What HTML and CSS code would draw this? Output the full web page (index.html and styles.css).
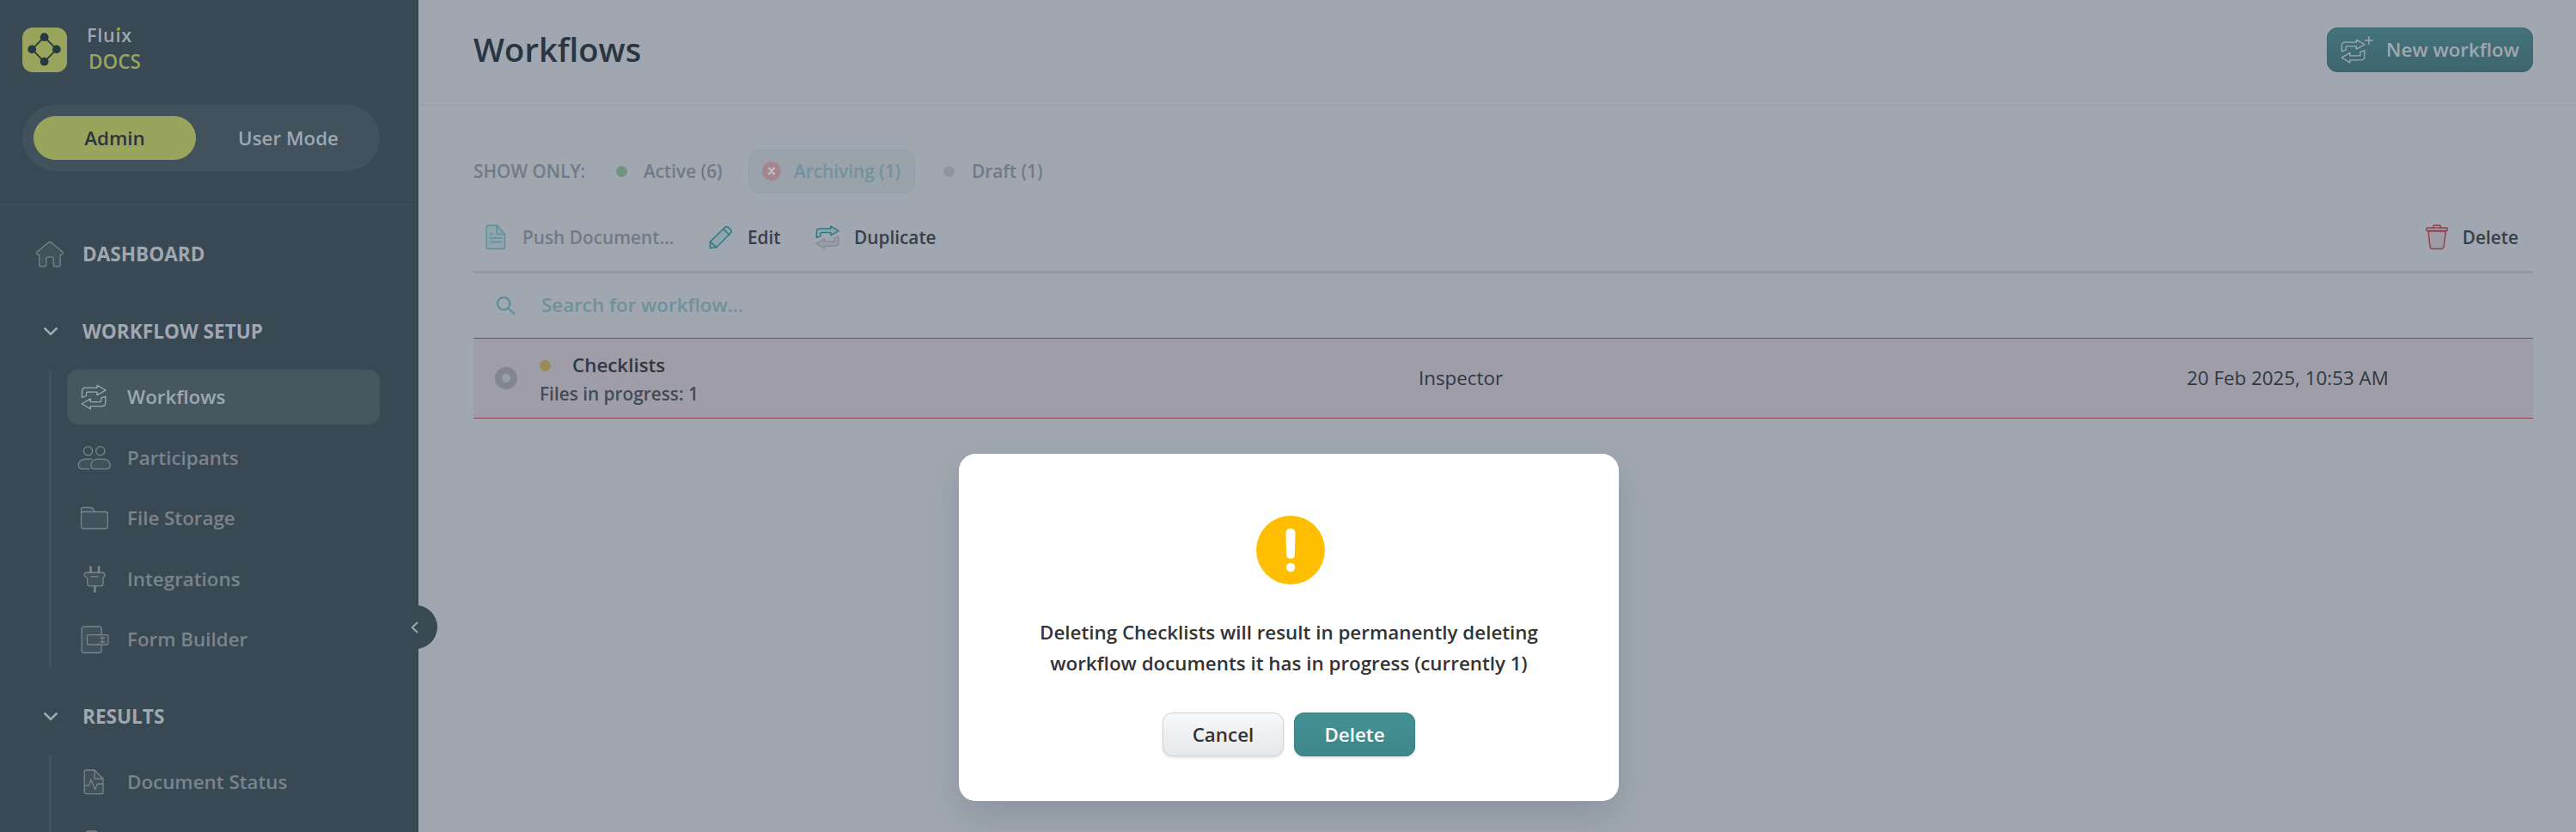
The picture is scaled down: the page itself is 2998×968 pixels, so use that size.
FILE: index.html
```html
<!DOCTYPE html>
<html lang="en">
<head>
<meta charset="utf-8">
<title>Workflows</title>
<link rel="stylesheet" href="styles.css">
</head>
<body>
<svg class="defs" width="0" height="0">
  <symbol id="flow-top" viewBox="0 0 30 30"><path d="M1.500 15.500V8.200Q1.500 4.200 5.500 4.200H19V1.200L29 7L19 12.600V9.200H7.500Q6.500 9.200 6.500 10.200V13.500Z"/></symbol>
  <symbol id="flow-bottom" viewBox="0 0 30 30"><path d="M28.800 14.200V21.500Q28.800 25.700 24.600 25.700H11.200V28.800L1.200 22.800L11.200 17V20.600H22.600Q23.700 20.600 23.700 19.500V16.200Z"/></symbol>
</svg>
<div class="app">
  <aside class="sidebar">
    <div class="brand">
      <svg class="brand-mark" viewBox="0 0 52 52"><rect width="52" height="52" rx="12"/><path d="M25.600 11L39.800 25.300L25.600 39.800L11.200 25.300Z"/><circle cx="25.600" cy="11.200" r="4.900"/><circle cx="39.800" cy="25.400" r="4.900"/><circle cx="25.600" cy="39.700" r="4.900"/><circle cx="11.200" cy="25.400" r="4.900"/></svg>
      <div class="brand-text"><span class="brand-name">Fluix</span><span class="brand-product">DOCS</span></div>
    </div>
    <div class="mode">
      <span class="mode-option mode-active">Admin</span>
      <span class="mode-option">User Mode</span>
    </div>
    <nav class="nav">
      <div class="heading">
        <svg class="home" viewBox="0 0 34 32"><path d="M14.600 2.700Q17 .8 19.400 2.700L32 13.200Q33 16.400 29.200 16.400V27.700Q29.200 30.200 26.900 30.200H23.500Q21.200 30.200 21.200 27.700V21.500Q21.200 19.200 19 19.200H15Q12.800 19.200 12.800 21.500V27.700Q12.800 30.200 10.500 30.200H7Q4.700 30.200 4.700 27.700V16.400Q1 16.400 2 13.200Z"/></svg>
        <span>DASHBOARD</span>
      </div>
      <div class="heading">
        <svg class="chevron" viewBox="0 0 16 10"><path d="M1.300 1.300L8 7.900L14.700 1.300"/></svg>
        <span>WORKFLOW SETUP</span>
      </div>
      <div class="group">
        <div class="item item-active"><svg class="icon flow" viewBox="0 0 30 30"><use href="#flow-top"/><use href="#flow-bottom"/></svg><span>Workflows</span></div>
        <div class="item"><svg class="icon people" viewBox="0 0 40 30"><circle cx="12.500" cy="6.700" r="5.100"/><circle cx="26.800" cy="6.700" r="5.100"/><path class="shade" d="M14.200 27.600H6Q1.300 27.600 1.300 23Q2.200 16.200 10 16.200H16.500Q14.500 18 14.500 22Z"/><path d="M14.200 27.600H6Q1.300 27.600 1.300 23Q2.200 16.200 10 16.200H16.800"/><path class="fill" d="M20.500 27.600Q15.700 27.600 15.700 23Q16.700 16.200 24 16.200H29.500Q37 16.200 38.300 23Q38.300 27.600 33.500 27.600Z"/></svg><span>Participants</span></div>
        <div class="item"><svg class="icon folder" viewBox="0 0 34 28"><path class="fill" d="M17.500 6.500H30Q32.300 6.500 32.300 8.800V23.500Q32.300 26 30 26H4Q1.500 26 1.500 23.500V3.500Q1.500 1.500 3.500 1.500H12.500Q14 1.500 15.500 3.500Z"/><path d="M1.500 8.500Q1.500 6.500 4 6.500H17.500"/></svg><span>File Storage</span></div>
        <div class="item"><svg class="icon plug" viewBox="0 0 26 32"><path class="fill" d="M4 8H22Q25.200 8.500 25 12L23 14.500V21Q23 23.900 20 23.900H8Q4.700 23.900 4.700 21V14.500L.9 12Q.7 8.500 4 8Z"/><path d="M8.800 12.800H17.500"/><path class="pins" d="M8.500 1.500V8M18 1.500V8M13.300 24V30.500"/></svg><span>Integrations</span></div>
        <div class="item"><svg class="icon form" viewBox="0 0 33 33"><path class="fill" d="M24.200 10.500V3.500Q24.200 1 21.700 1H4Q1.200 1 1.200 3.500V29Q1.200 31.500 4 31.500H21.700Q24.200 31.500 24.200 29V22"/><rect class="fill" x="7.500" y="10.700" width="24.500" height="11.300" rx="1.500"/><path d="M23 14H27.500M25.200 14V19M23 19H27.500"/></svg><span>Form Builder</span></div>
      </div>
      <div class="heading">
        <svg class="chevron" viewBox="0 0 16 10"><path d="M1.300 1.300L8 7.900L14.700 1.300"/></svg>
        <span>RESULTS</span>
      </div>
      <div class="group">
        <div class="item"><svg class="icon doc" viewBox="0 0 24 30"><path class="fill" d="M1.200 26.500V3Q1.200 1 3.200 1H13L23 11V26.500Q23 28.700 21 28.700H3.200Q1.200 28.700 1.200 26.500Z"/><path d="M13 1V11H23M1.500 18.800H6.500L9 12L13.500 23.500L16.200 17H22.500"/></svg><span>Document Status</span></div>
        <div class="item"><svg class="icon doc" viewBox="0 0 24 30"><path class="fill" d="M3.500 3Q3.500 1 5.500 1H13.500Q15.500 1 16.500 3V28H3.500Z"/></svg></div>
      </div>
    </nav>
    <button class="collapse"><svg viewBox="0 0 9 14"><path d="M7.500 1.500L1.800 7L7.500 12.500"/></svg></button>
  </aside>
  <main class="main">
    <header class="header">
      <h1>Workflows</h1>
      <button class="new">
        <svg class="new-icon" viewBox="0 0 38 32"><use href="#flow-top" x="0" y="3" width="29" height="29"/><use href="#flow-bottom" x="0" y="3" width="29" height="29"/><path d="M33 .500V9.500M28.500 5H37.500"/></svg>
        <span>New workflow</span>
      </button>
    </header>
    <section class="content">
      <div class="filters">
        <span class="filters-label">SHOW ONLY:</span>
        <span class="filter active"><i class="dot green"></i>Active (6)</span>
        <span class="filter archiving"><svg viewBox="0 0 22 22"><circle cx="11" cy="11" r="11"/><path d="M8 7.500L14 14.500M14 7.500L8 14.500"/></svg>Archiving (1)</span>
        <span class="filter draft"><i class="dot grey"></i>Draft (1)</span>
      </div>
      <div class="toolbar">
        <span class="tool disabled"><svg class="t-doc" viewBox="0 0 24 30"><path class="tint" d="M1.200 26.500V3Q1.200 1.200 3 1.200H13.500L22.500 11.500V26.500Q22.500 28.600 20.500 28.600H3.200Q1.200 28.600 1.200 26.500Z"/><path d="M13.300 1.500V11.500H22.500M5.500 11.300H8M5.500 16H18.500M5.500 20.500H18.500"/></svg>Push Document...</span>
        <span class="tool edit"><svg class="t-pencil" viewBox="0 0 28 28"><path class="tint" d="M1.500 19.200L18.500 2.700Q20.500 .800 22.500 2.500L25.300 5.200Q27 7.200 25.300 9.200L8.700 25.800L1.300 26.700Z"/><path d="M17 4.300L23.600 11M1.500 19.200L8.700 25.800"/></svg>Edit</span>
        <span class="tool duplicate"><svg class="t-dup" viewBox="0 0 30 30"><use class="top" href="#flow-top"/><use class="bottom" href="#flow-bottom"/></svg>Duplicate</span>
        <span class="tool delete"><svg class="t-trash" viewBox="0 0 26 30"><path class="tint" d="M3 8L5 25.500Q5.300 28.600 8 28.600H18Q20.700 28.600 21.200 25.500L23.500 8Z"/><rect class="tint" x="1" y="4" width="24.200" height="3.600" rx="1"/><path d="M9 4V2.500Q9 1.300 10 1.300H16.300Q17.300 1.300 17.300 2.500V4"/></svg>Delete</span>
      </div>
      <div class="search"><svg viewBox="0 0 24 22"><circle cx="9.200" cy="8.200" r="7.200"/><path d="M14 13.500L21.300 19.800"/></svg><span>Search for workflow...</span></div>
      <div class="row">
        <span class="radio"></span>
        <div class="name"><div class="name-title"><i class="dot yellow"></i>Checklists</div><div class="name-sub">Files in progress: 1</div></div>
        <span class="role">Inspector</span>
        <span class="date">20 Feb 2025, 10:53 AM</span>
      </div>
    </section>
  </main>
</div>
<div class="overlay">
  <div class="dialog">
    <svg class="warn" viewBox="0 0 80 80"><circle cx="40" cy="40" r="40"/><path d="M34.500 20.500Q34.500 15 40 15Q45.500 15 45.500 20.500L44.900 45.500Q44.500 50 40 50Q35.500 50 35.100 45.500Z"/><circle class="point" cx="40" cy="60" r="5.200"/></svg>
    <p>Deleting Checklists will result in permanently deleting<br>workflow documents it has in progress (currently 1)</p>
    <div class="actions"><button class="btn cancel">Cancel</button><button class="btn confirm">Delete</button></div>
  </div>
</div>
</body>
</html>
```

FILE: styles.css
```css
* { box-sizing: border-box; }
html, body { margin: 0; height: 968px; overflow: hidden; }
body { font: 600 22.360px "Open Sans", "Noto Sans", sans-serif; background: #a0a7b0; color: #2f3842; }
button { font: inherit; border: 0; padding: 0; }
svg { flex: none; fill: none; stroke-linejoin: round; stroke-linecap: round; }
svg.defs { position: absolute; }
.app { display: flex; height: 968px; }

.sidebar { position: relative; width: 487px; height: 968px; flex: none; background: #384953; color: #a0a7b0; }
.brand { display: flex; height: 122px; padding: 32px 0 0 26px; }
.brand-mark { width: 52px; height: 52px; fill: #263a45; }
.brand-mark rect { fill: #99a55c; }
.brand-mark path { fill: none; stroke: #263a45; stroke-width: 1.800; }
.brand-text { display: flex; flex-direction: column; padding-left: 23px; }
.brand-name { position: relative; font-size: 21.500px; letter-spacing: .8px; line-height: 17px; height: 30px; }
.brand-name::after { content: ""; position: absolute; left: 35px; top: 0; width: 4px; height: 3px; border-radius: 1px; background: #93a02f; }
.brand-product { font-size: 22.500px; line-height: 19px; color: #99a55c; padding-left: 2px; }
.mode { display: flex; width: 416px; height: 77px; margin-left: 26px; padding: 13px; border-radius: 39px; background: #41525c; }
.mode-option { flex: none; width: 189px; display: flex; align-items: center; justify-content: center; padding-bottom: 1px; }
.mode-option + .mode-option { width: 201px; padding-left: 14px; }
.mode-active { background: #99a55c; color: #2b3540; border-radius: 26px; }
.nav { margin-top: 38px; height: 731px; overflow: hidden; }
.nav::before { content: ""; display: block; width: 481px; height: 1px; background: #41525c; }
.heading { display: flex; align-items: center; height: 64px; margin-top: 26px; padding-left: 41px; font-weight: 700; font-size: 22.600px; }
.heading svg { stroke: #a0a7b0; }
.heading span { padding-left: 21px; padding-bottom: 2px; }
.heading .home { width: 34px; height: 32px; stroke: #7c838d; stroke-width: 1.300; fill: #41525c; }
.chevron { width: 16px; height: 10px; margin: 0 8px 0 10px; stroke-width: 2.600; }
.group { margin: 12px 0 0 57px; width: 385px; padding-left: 18px; border-left: 3px solid #41525c; display: flex; flex-direction: column; gap: 6.500px; }
.item { flex: none; display: flex; align-items: center; height: 64px; border-radius: 13px; color: #7c838d; }
.item span { padding-left: 19px; padding-bottom: 1px; }
.item-active { background: #47575f; color: #a0a7b0; }
.icon { stroke: currentColor; stroke-width: 1.300; }
.icon .fill, .icon .shade { fill: #41525c; }
.icon .shade { stroke: none; }
.flow { width: 30px; height: 30px; margin: 0 5px 0 16px; }
.people { width: 40px; height: 30px; margin-left: 12px; margin-right: -1px; }
.folder { width: 34px; height: 28px; margin: 0 2px 0 15px; }
.plug { width: 26px; height: 32px; margin: 0 6px 0 19px; }
.plug .pins { stroke-width: 2.600; }
.form { width: 33px; height: 33px; margin: 0 2px 0 16px; }
.doc { width: 24px; height: 30px; margin: 0 8px 0 19px; }
.collapse { position: absolute; left: 458px; top: 704px; width: 51px; height: 51px; border-radius: 50%; background: #384953; display: flex; align-items: center; padding-left: 20px; }
.collapse svg { width: 9px; height: 14px; stroke: #a0a7b0; stroke-width: 2; }

.main { flex: 1; }
.header { display: flex; align-items: center; justify-content: space-between; height: 123px; padding: 0 50px 6px 64px; border-bottom: 1px solid #949ca5; }
h1 { margin: 0; padding-bottom: 2px; font-size: 38.200px; font-weight: 600; color: #2b3540; }
.new { display: flex; align-items: center; width: 240px; height: 52px; border-radius: 13px; padding-left: 16px; background: linear-gradient(#43737c, #3e656e); box-shadow: inset 0 0 0 1px #3d6771; color: #a0a7b0; }
.new span { padding-bottom: 1px; }
.new-icon { width: 38px; height: 32px; margin-right: 15px; stroke: #a0a7b0; stroke-width: 1.400; }
.content { padding: 0 50px 0 64px; }
.filters { display: flex; align-items: center; height: 51px; margin-top: 51px; font-size: 20.8px; color: #727a84; }
.filters-label { width: 166px; padding-bottom: 1px; }
.filter { display: flex; align-items: center; height: 51px; padding-bottom: 1px; }
.dot { flex: none; width: 13px; height: 13px; border-radius: 50%; }
.green { background: #729282; margin-right: 19px; }
.grey { background: #8e959e; margin-right: 20px; }
.yellow { background: #9c8b56; margin: 3px 25px 0 0; }
.active { width: 154px; }
.archiving { width: 194px; padding-left: 15px; border: 1px solid #8fa0a9; border-radius: 13px; background: #9aa2ac; color: #71939b; }
.archiving svg { width: 22px; height: 22px; margin-right: 15px; fill: #a5858e; stroke: #c0c4ca; stroke-width: 2; }
.archiving circle { stroke: none; }
.draft { padding-left: 33px; }
.toolbar { display: flex; align-items: center; height: 93px; padding: 12px 17px 0 14px; border-bottom: 3px solid #8f97a0; font-size: 20.8px; }
.tool { display: flex; align-items: center; color: #373f4a; }
.disabled { color: #727a84; width: 260px; }
.tool svg { stroke: #2b7b84; stroke-width: 1.600; }
.tool .tint { fill: #91a4ad; }
.tool .t-doc { width: 24px; height: 30px; margin-right: 19px; stroke: #5c9199; stroke-width: 1.500; }
.t-pencil { width: 28px; height: 28px; margin-right: 17px; }
.edit { width: 124px; }
.t-dup { width: 28px; height: 28px; margin-right: 17px; }
.t-dup .top { fill: #91a4ad; }
.t-dup .bottom { stroke: #858c95; fill: #989fa8; }
.delete { margin-left: auto; }
.tool .t-trash { width: 26px; height: 30px; margin-right: 17px; stroke: #8f424e; stroke-width: 1.500; }
.t-trash .tint { fill: #9f9ca6; }
.search { display: flex; align-items: center; height: 75px; padding-left: 26px; color: #70919a; }
.search span { padding-bottom: 2px; }
.search svg { width: 24px; height: 22px; margin-right: 29px; stroke: #5c9199; stroke-width: 2.300; }
.row { display: grid; grid-template-columns: 77px 1023px 894px 1fr; align-items: center; height: 94px; border-top: 1px solid #8a444f; border-bottom: 1px solid #8a444f; background: #9f9ea8; }
.radio { width: 26px; height: 26px; margin-left: 25px; border-radius: 50%; border: 8px solid #81878f; }
.name { padding-top: 2px; }
.name-title { display: flex; align-items: center; height: 30px; }
.name-sub { font-size: 20.8px; line-height: 30px; margin-top: 4px; color: #434b56; }
.role, .date { font-weight: 400; padding-bottom: 1px; }

.overlay { position: absolute; left: 0; top: 0; width: 2998px; height: 968px; padding-top: 528px; display: flex; justify-content: center; align-items: flex-start; overflow: hidden; }
.dialog { display: flex; flex-direction: column; align-items: center; width: 768px; height: 404px; margin-left: 2px; padding-top: 72px; background: #fff; border-radius: 19.500px; box-shadow: 0 18px 40px rgba(40, 60, 70, .16); color: #333; }
.warn { width: 80px; height: 80px; margin-left: 4px; fill: #ffbf00; }
.warn path, .warn .point { fill: #fff; }
.dialog p { margin: 38px 0 0; text-align: center; line-height: 36px; }
.actions { display: flex; gap: 12px; margin-top: 39px; }
.btn { width: 141px; height: 51px; padding-bottom: 1px; border-radius: 12px; }
.cancel { color: #333; background: linear-gradient(#f8f9fb, #e6e7ec); box-shadow: inset 0 0 0 1px #cfd1d5, 0 2px 3px rgba(0, 0, 0, .1); }
.confirm { color: #fff; background: linear-gradient(#439193, #3e878b); box-shadow: inset 0 0 0 1px #3b8084, 0 2px 3px rgba(0, 0, 0, .1); }
```
